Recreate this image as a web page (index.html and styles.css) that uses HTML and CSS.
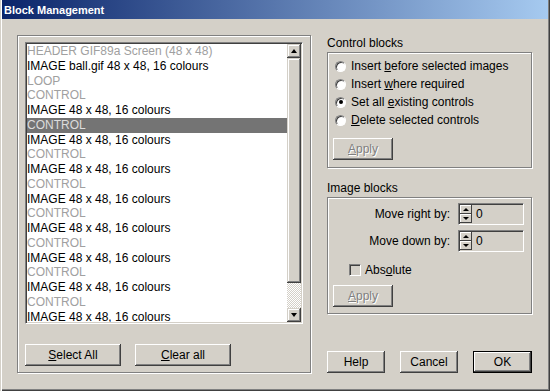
FILE: index.html
```html
<!DOCTYPE html>
<html lang="en">
<head>
  <meta charset="UTF-8">
  <title>Block Management</title>
  <link rel="stylesheet" href="styles.css">
</head>
<body>
  <div class="window">
    <div class="titlebar">Block Management</div>

    <div class="content">
      <div class="group group-left">
        <div class="listbox">
          <ul class="items">
            <li class="dim">HEADER GIF89a Screen (48 x 48)</li>
            <li>IMAGE ball.gif 48 x 48, 16 colours</li>
            <li class="dim">LOOP</li>
            <li class="dim">CONTROL</li>
            <li>IMAGE 48 x 48, 16 colours</li>
            <li class="sel">CONTROL</li>
            <li>IMAGE 48 x 48, 16 colours</li>
            <li class="dim">CONTROL</li>
            <li>IMAGE 48 x 48, 16 colours</li>
            <li class="dim">CONTROL</li>
            <li>IMAGE 48 x 48, 16 colours</li>
            <li class="dim">CONTROL</li>
            <li>IMAGE 48 x 48, 16 colours</li>
            <li class="dim">CONTROL</li>
            <li>IMAGE 48 x 48, 16 colours</li>
            <li class="dim">CONTROL</li>
            <li>IMAGE 48 x 48, 16 colours</li>
            <li class="dim">CONTROL</li>
            <li>IMAGE 48 x 48, 16 colours</li>
          </ul>
          <div class="vscroll">
            <div class="sbtn"><i class="arr-up"></i></div>
            <div class="thumb"></div>
            <div class="track"></div>
            <div class="sbtn"><i class="arr-down"></i></div>
          </div>
        </div>
        <div class="btn-row">
          <button class="btn wide"><u>S</u>elect All</button>
          <button class="btn wide"><u>C</u>lear all</button>
        </div>
      </div>

      <div class="side">
        <div class="label">Control blocks</div>
        <div class="group box-control">
          <div class="radio-row"><span class="radio"></span><span>Insert <u>b</u>efore selected images</span></div>
          <div class="radio-row"><span class="radio"></span><span>Insert <u>w</u>here required</span></div>
          <div class="radio-row"><span class="radio on"></span><span>Set all <u>e</u>xisting controls</span></div>
          <div class="radio-row"><span class="radio"></span><span><u>D</u>elete selected controls</span></div>
          <button class="btn apply disabled"><u>A</u>pply</button>
        </div>

        <div class="label label-image">Image blocks</div>
        <div class="group box-image">
          <div class="field-row">
            <span class="field-label">Move right by:</span>
            <div class="spin">
              <div class="spin-btns">
                <span class="spin-btn"><i class="mini-up"></i></span>
                <span class="spin-btn"><i class="mini-down"></i></span>
              </div>
              <span class="spin-val">0</span>
            </div>
          </div>
          <div class="field-row">
            <span class="field-label">Move down by:</span>
            <div class="spin">
              <div class="spin-btns">
                <span class="spin-btn"><i class="mini-up"></i></span>
                <span class="spin-btn"><i class="mini-down"></i></span>
              </div>
              <span class="spin-val">0</span>
            </div>
          </div>
          <div class="check-row"><span class="check"></span><span>Abs<u>o</u>lute</span></div>
          <button class="btn apply disabled"><u>A</u>pply</button>
        </div>

        <div class="dlg-buttons">
          <button class="btn">Help</button>
          <button class="btn">Cancel</button>
          <button class="btn ok">OK</button>
        </div>
      </div>
    </div>
  </div>
</body>
</html>
```

FILE: styles.css
```css
* {
  margin: 0;
  padding: 0;
  box-sizing: border-box;
}

body {
  background: #d4d0c8;
  font: 12px "Liberation Sans", Arial, sans-serif;
  color: #000;
}

u {
  text-decoration: underline;
  text-underline-offset: 1px;
}

.window {
  width: 550px;
  height: 391px;
  padding: 0 2px 2px 2px;
  background: #d4d0c8;
  box-shadow: inset 1px 0 #d4d0c8, inset 2px 0 #fff, inset -1px -1px #404040, inset -2px -2px #808080;
  overflow: hidden;
}

.titlebar {
  height: 19px;
  padding: 2px 0 0 2px;
  line-height: 17px;
  font-size: 11px;
  font-weight: bold;
  color: #fff;
  background: linear-gradient(to right, #0a246a, #a6caf0);
}

.content {
  display: flex;
  padding: 16px 0 0 15px;
}

/* etched frames */
.group {
  border: 1px solid #808080;
  box-shadow: inset 1px 1px #fff, 1px 1px #fff;
}

.group-left {
  width: 294px;
  height: 338px;
  padding: 6px 7px;
}

/* list box */
.listbox {
  display: flex;
  width: 278px;
  height: 282px;
  border: 1px solid;
  border-color: #808080 #fff #fff #808080;
  box-shadow: inset 1px 1px #404040, inset -1px -1px #d4d0c8;
  padding: 1px;
  background: #fff;
}

.items {
  flex: 1;
  list-style: none;
  overflow: hidden;
}

.items li {
  height: 14.75px;
  line-height: 14.75px;
  white-space: nowrap;
}

.items .dim {
  color: #a0a0a0;
}

.items .sel {
  background: #747474;
  color: #dcdcdc;
}

.vscroll {
  width: 14px;
  display: flex;
  flex-direction: column;
}

.sbtn, .thumb {
  background: #d4d0c8;
  box-shadow: inset -1px -1px #404040, inset 1px 1px #d4d0c8, inset -2px -2px #808080, inset 2px 2px #fff;
}

.sbtn {
  height: 14px;
  display: flex;
  align-items: center;
  justify-content: center;
}

.thumb {
  height: 225px;
}

.track {
  flex: 1;
  background: repeating-conic-gradient(#d4d0c8 0 25%, #fff 0 50%) 0 0 / 2px 2px;
}

.arr-up, .arr-down, .mini-up, .mini-down {
  display: block;
  width: 0;
  height: 0;
  border-left: 3px solid transparent;
  border-right: 3px solid transparent;
}

.arr-up {
  border-bottom: 4px solid #000;
}

.arr-down {
  border-top: 4px solid #000;
}

.mini-up {
  border-bottom: 3px solid #000;
}

.mini-down {
  border-top: 3px solid #000;
}

/* buttons */
.btn {
  font: 12px "Liberation Sans", Arial, sans-serif;
  color: #000;
  height: 22px;
  width: 58px;
  border: none;
  background: #d4d0c8;
  box-shadow: inset -1px -1px #404040, inset 1px 1px #fff, inset -2px -2px #808080, inset 2px 2px #d4d0c8;
}

.btn.wide {
  width: 96px;
}

.btn.ok {
  width: 59px;
  border: 1px solid #000;
}

.btn.disabled {
  color: #808080;
  text-shadow: 1px 1px #fff;
}

.btn-row {
  display: flex;
  gap: 14px;
  margin-top: 20px;
}

/* right column */
.side {
  width: 206px;
  margin-left: 16px;
  display: flex;
  flex-direction: column;
}

.label {
  line-height: 14px;
  margin-top: 1px;
  margin-bottom: 2px;
}

.label-image {
  margin-top: 13px;
}

.box-control, .box-image {
  display: flex;
  flex-direction: column;
  align-items: flex-start;
}

.box-control {
  width: 205px;
  height: 116px;
  padding: 4px 0 0 7px;
}

.radio-row {
  display: flex;
  align-items: center;
  gap: 5px;
  height: 18px;
}

.radio {
  width: 11px;
  height: 11px;
  border-radius: 50%;
  border: 1px solid;
  border-color: #808080 #fff #fff #808080;
  background: #fff;
  box-shadow: inset 1px 1px #404040;
  display: flex;
  align-items: center;
  justify-content: center;
}

.radio.on::after {
  content: "";
  width: 4px;
  height: 4px;
  border-radius: 50%;
  background: #000;
}

.apply {
  width: 60px;
  margin: 9px 0 0 -2px;
}

.box-image {
  width: 205px;
  height: 117px;
  padding: 5px 7px 0 5px;
}

.field-row {
  align-self: stretch;
  display: flex;
  justify-content: flex-end;
  align-items: center;
  gap: 8px;
  height: 22px;
  margin-bottom: 5px;
}

.spin {
  display: flex;
  width: 66px;
  height: 22px;
  border: 1px solid;
  border-color: #808080 #fff #fff #808080;
  box-shadow: inset 1px 1px #404040, inset -1px -1px #d4d0c8;
  padding: 1px;
}

.spin-btns {
  width: 12px;
  display: flex;
  flex-direction: column;
}

.spin-btn {
  flex: 1;
  display: flex;
  align-items: center;
  justify-content: center;
  background: #d4d0c8;
  box-shadow: inset -1px -1px #404040, inset 1px 1px #fff;
}

.spin-val {
  flex: 1;
  padding: 1px 0 0 4px;
  line-height: 16px;
  background: #d4d0c8;
}

.check-row {
  display: flex;
  align-items: center;
  gap: 4px;
  height: 16px;
  margin: 5px 0 0 16px;
}

.check {
  width: 12px;
  height: 12px;
  border: 1px solid;
  border-color: #808080 #fff #fff #808080;
  box-shadow: inset 1px 1px #404040, inset -1px -1px #d4d0c8;
  background: #d4d0c8;
}

.box-image .apply {
  margin: 7px 0 0 0;
}

.dlg-buttons {
  display: flex;
  gap: 15px;
  margin-top: 37px;
}
```
